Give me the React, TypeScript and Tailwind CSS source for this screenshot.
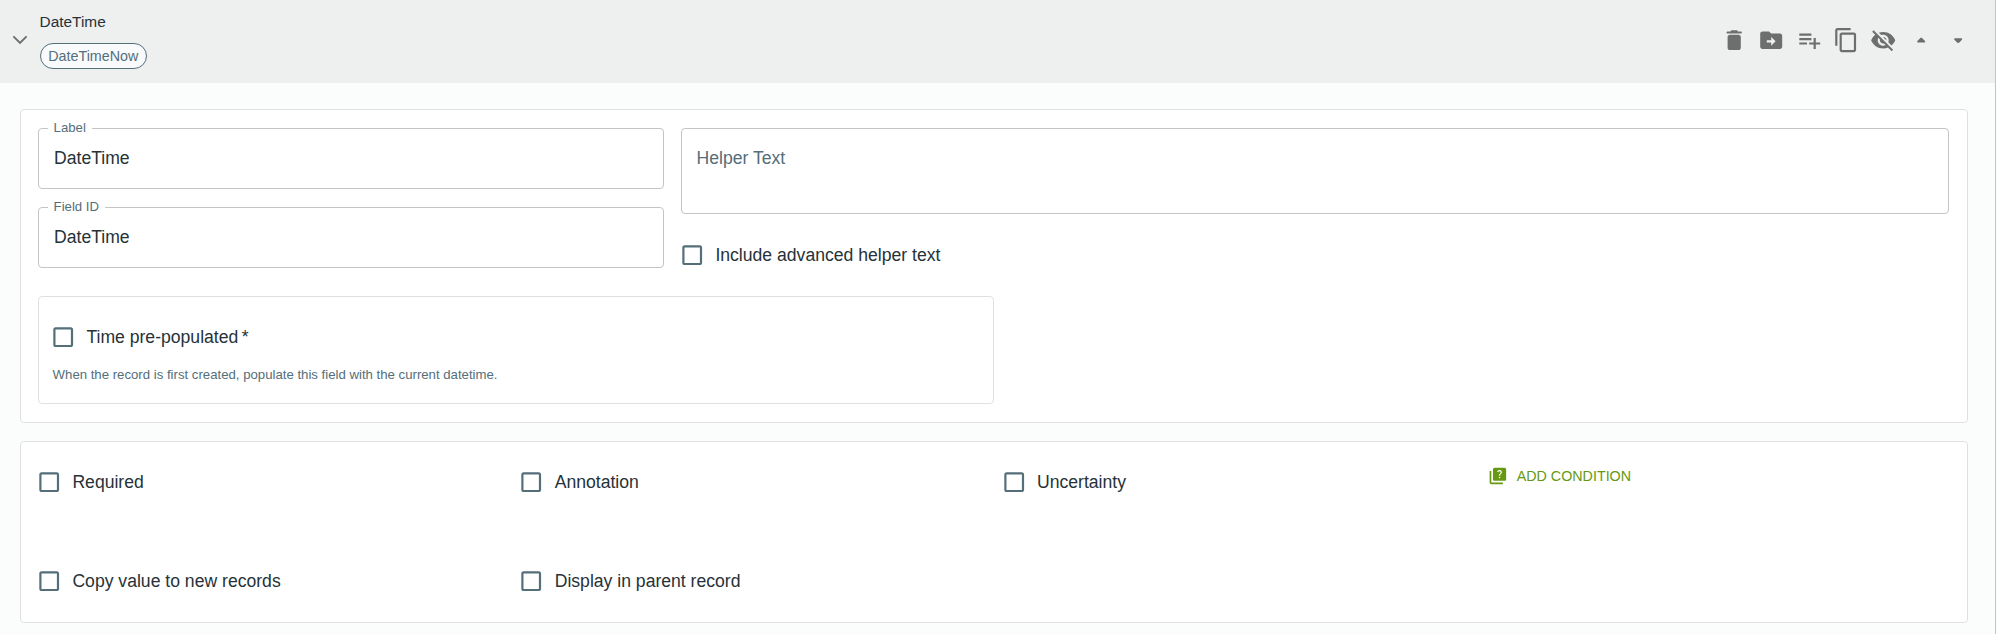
import React from "react";
import {
  MdCheckBoxOutlineBlank,
  MdContentCopy,
  MdPlaylistAdd,
  MdQuiz,
  MdVisibilityOff,
} from "react-icons/md";

function TrashIcon() {
  return (
    <svg className="size-[26.4px]" viewBox="0 0 24 24" fill="currentColor">
      <path d="M6 19c0 1.1.9 2 2 2h8c1.1 0 2-.9 2-2V9c0-1.1-.9-2-2-2H8c-1.1 0-2 .9-2 2v10zM18 4h-2.5l-.71-.71c-.18-.18-.44-.29-.7-.29H9.91c-.26 0-.52.11-.7.29L8.5 4H6c-.55 0-1 .45-1 1s.45 1 1 1h12c.55 0 1-.45 1-1s-.45-1-1-1z" />
    </svg>
  );
}

function MoveIcon() {
  return (
    <svg className="size-[26.4px]" viewBox="0 0 24 24" fill="currentColor">
      <path d="M20 6h-8l-2-2H4c-1.1 0-1.99.9-1.99 2L2 18c0 1.1.9 2 2 2h16c1.1 0 2-.9 2-2V8c0-1.1-.9-2-2-2zm-8 11v-3H8v-2h4V9l4 4-4 4z" />
    </svg>
  );
}

function Check({ label, required = false }: { label: string; required?: boolean }) {
  return (
    <label className="flex h-[26.4px] items-center text-[17.6px] leading-[26.4px] text-[#263238]">
      <MdCheckBoxOutlineBlank className="size-[26.4px] shrink-0 text-[#546e7a]" />
      <span className="ml-[10px] whitespace-nowrap">
        {label}
        {required && <span className="ml-[3.5px]">*</span>}
      </span>
    </label>
  );
}

function Field({ label, value }: { label: string; value: string }) {
  return (
    <div className="relative h-[61px] rounded-[4px] border border-[#c4c4c4] px-[15px] pt-[16px]">
      <span className="absolute -top-[10px] left-[9px] bg-white pr-[6px] pl-[5.6px] text-[13.2px] leading-[18px] text-[#546e7a]">
        {label}
      </span>
      <span className="block text-[17.6px] leading-[26px] text-[#263238]">{value}</span>
    </div>
  );
}

export default function App() {
  return (
    <div className="flex h-[634px] w-full flex-col border-r border-[#c2c4c4] bg-[#fbfdfc] font-['Liberation_Sans',Arial,sans-serif]">
      <header className="flex h-[83px] shrink-0 items-start justify-between bg-[#eeefef] pr-[23.7px]">
        <div className="flex">
          <svg className="mt-[34px] ml-[12px] h-[12px] w-[16px]" viewBox="0 0 16 12" fill="none" stroke="#6c6f6e" strokeWidth="1.9">
            <path d="M1.4 2.4 8 9 14.6 2.4" />
          </svg>
          <div className="ml-[11.6px] pt-[11px]">
            <div className="text-[15.4px] leading-[22px] text-[#263238]">DateTime</div>
            <div className="mt-[10px] flex h-[26px] w-[107.4px] items-center justify-center rounded-full border border-[#546e7a] bg-[#f8fafc] text-[14.3px] leading-[24px] text-[#546e7a]">
              DateTimeNow
            </div>
          </div>
        </div>
        <div className="mt-[27px] flex items-center gap-[10.95px] text-[26.4px] text-[#6c6f6e]">
          <TrashIcon />
          <MoveIcon />
          <MdPlaylistAdd />
          <MdContentCopy />
          <MdVisibilityOff />
          <svg className="size-[26.4px]" viewBox="0 0 26.4 26.4" fill="currentColor">
            <path d="M12.4 10.9q.8-.7 1.6 0l3 3q.8 1.5-.6 1.5h-6.4q-1.4 0-.6-1.5Z" />
          </svg>
          <svg className="size-[26.4px]" viewBox="0 0 26.4 26.4" fill="currentColor">
            <path d="M12.4 15.7q.8.7 1.6 0l3-3q.8-1.5-.6-1.5h-6.4q-1.4 0-.6 1.5Z" />
          </svg>
        </div>
      </header>

      <main className="flex flex-col gap-[18px] pt-[26px] pr-[27px] pl-[20px]">
        <section className="h-[314px] rounded-[4px] border border-[#dfe1e1] bg-white pt-[18px] pr-[18px] pl-[17px]">
          <div className="flex gap-[17px]">
            <div className="flex w-[626px] flex-col gap-[18px]">
              <Field label="Label" value="DateTime" />
              <Field label="Field ID" value="DateTime" />
            </div>
            <div className="flex-1">
              <div className="h-[86px] rounded-[4px] border border-[#c4c4c4] px-[14.6px] pt-[16px] text-[17.6px] leading-[26px] text-[#546e7a]">
                Helper Text
              </div>
              <div className="mt-[28px] -ml-[2px]">
                <Check label="Include advanced helper text" />
              </div>
            </div>
          </div>
          <div className="mt-[28px] h-[108px] w-[956px] rounded-[4px] border border-[#e0e0e0] pt-[27px] pl-[13.6px]">
            <div className="-ml-[2.6px]">
              <Check label="Time pre-populated" required />
            </div>
            <p className="mt-[14px] text-[13.2px] leading-[20px] text-[#546e7a]">
              When the record is first created, populate this field with the current datetime.
            </p>
          </div>
        </section>

        <section className="grid h-[182px] grid-cols-[482.3px_482.3px_482.3px_1fr] grid-rows-[99px_1fr] rounded-[4px] border border-[#dfe1e1] bg-white pt-[27px] pl-[15px]">
          <Check label="Required" />
          <Check label="Annotation" />
          <Check label="Uncertainty" />
          <button className="-mt-[6px] ml-[5px] flex h-[26px] items-center gap-[9px] text-[14.3px] leading-[26px] text-[#669911]">
            <MdQuiz className="size-[19.8px]" />
            ADD CONDITION
          </button>
          <Check label="Copy value to new records" />
          <Check label="Display in parent record" />
        </section>
      </main>
    </div>
  );
}
